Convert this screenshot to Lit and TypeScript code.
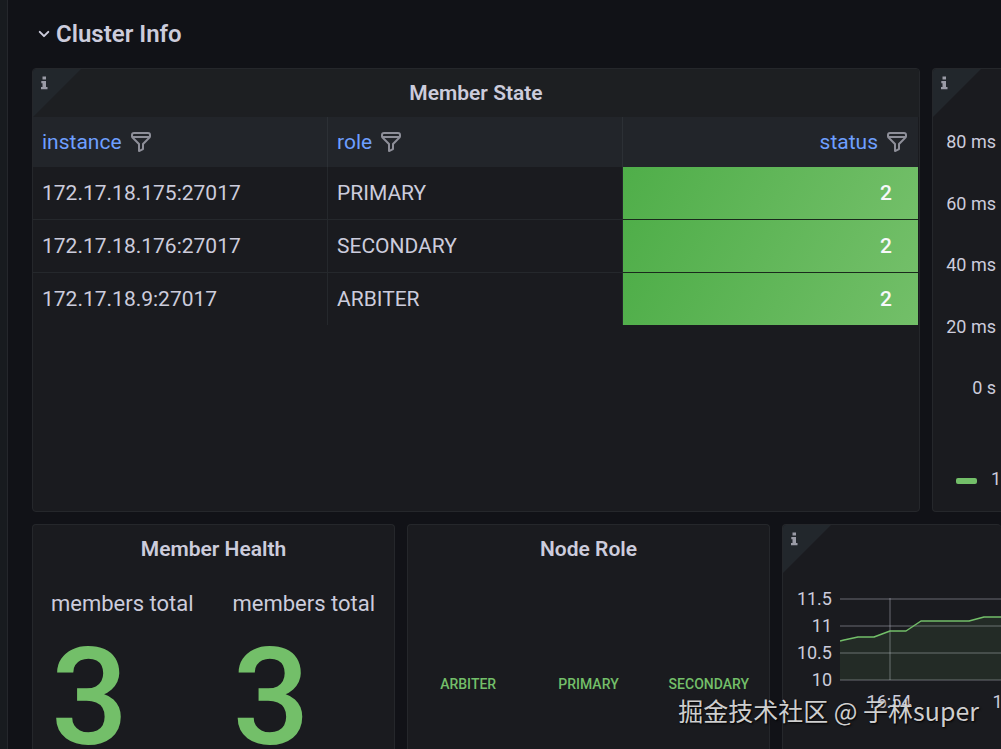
import { LitElement, html, css, svg } from "lit";
import { customElement } from "lit/decorators.js";

const filterIcon = html`<svg class="filter-icon" viewBox="0 0 24 24" aria-hidden="true"><path d="M19,2H5A3,3,0,0,0,2,5V6.17a3,3,0,0,0,.25,1.2l0,.06a2.81,2.81,0,0,0,.59.86L9,14.41V21a1,1,0,0,0,.47.85A1,1,0,0,0,10,22a1,1,0,0,0,.45-.11l4-2A1,1,0,0,0,15,19V14.41l6.12-6.12a2.81,2.81,0,0,0,.59-.86l0-.06A3,3,0,0,0,22,6.17V5A3,3,0,0,0,19,2ZM13.29,13.29A1,1,0,0,0,13,14v4.38l-2,1V14a1,1,0,0,0-.29-.71L5.41,8H18.59ZM20,6H4V5A1,1,0,0,1,5,4H19a1,1,0,0,1,1,1Z"/></svg>`;

const infoCorner = html`<button class="corner" aria-label="Panel description">
  <svg viewBox="0 0 48 48" aria-hidden="true">
    <path class="corner-fill" d="M0 0H48L0 48Z"/>
    <path class="corner-glyph" d="M9.5 7.5H13V10.5H9.5ZM8.3 12H13V18H14.5V20.2H8V18H9.5V14.2H8.3Z"/>
  </svg>
</button>`;

@customElement("app-root")
export class AppRoot extends LitElement {
  private members = [
    { instance: "172.17.18.175:27017", role: "PRIMARY", status: 2 },
    { instance: "172.17.18.176:27017", role: "SECONDARY", status: 2 },
    { instance: "172.17.18.9:27017", role: "ARBITER", status: 2 },
  ];
  private lagTicks = ["80 ms", "60 ms", "40 ms", "20 ms", "0 s"];
  private totals = [3, 3];
  private roles = ["ARBITER", "PRIMARY", "SECONDARY"];
  private chartTicks = ["11.5", "11", "10.5", "10"];

  static styles = css`
    :host {
      display: flex;
      height: 100vh;
      overflow: hidden;
      background: #111217;
      color: #ccccdc;
      font-family: Roboto, "Noto Sans CJK SC", sans-serif;
      font-size: 21px;
      line-height: 32px;
    }
    * { box-sizing: border-box; }
    button {
      border: 0;
      padding: 0;
      margin: 0;
      background: none;
      color: inherit;
      font: inherit;
      cursor: pointer;
    }
    .rail {
      flex: 0 0 8px;
      background: #181b1f;
      border-right: 1px solid #25272c;
    }
    .main {
      flex: 1;
      min-width: 0;
      display: flex;
      flex-direction: column;
      padding-left: 24px;
    }
    .row-title {
      margin: 0;
      font-size: 24px;
      font-weight: 600;
      line-height: 36px;
      padding: 16px 0;
    }
    .row-toggle { display: flex; align-items: center; }
    .chevron { width: 24px; height: 24px; fill: #ccccdc; }
    .row { display: grid; gap: 12px; }
    .row-top {
      grid-template-columns: minmax(0, 1fr) 69px;
      flex: 0 0 444px;
      margin-bottom: 12px;
    }
    .row-bottom {
      grid-template-columns: 121fr 121fr 73fr;
      flex: 1;
      min-height: 0;
    }
    .panel {
      position: relative;
      display: flex;
      flex-direction: column;
      min-width: 0;
      background: #1a1b1f;
      border: 1px solid #25272b;
      border-radius: 4px;
      overflow: hidden;
    }
    .panel-open { border-right: 0; border-radius: 4px 0 0 4px; }
    .row-bottom .panel { border-bottom: 0; border-radius: 4px 4px 0 0; }
    .panel-title {
      margin: 0;
      font-size: 21px;
      font-weight: 600;
      line-height: 48px;
      text-align: center;
    }
    .panel-title-active { background: #1d1f22; }
    .corner { position: absolute; left: 0; top: 0; width: 48px; height: 48px; }
    .corner svg { display: block; width: 48px; height: 48px; }
    .corner-fill { fill: #22272c; }
    .corner-glyph { fill: #9a9ba6; }

    .table-wrap { padding-right: 1px; }
    table { width: 100%; border-collapse: separate; border-spacing: 0; table-layout: fixed; }
    th {
      height: 50px;
      padding: 0 9px;
      background: #22252a;
      border-right: 1px solid #2c3035;
      font-weight: 400;
      text-align: left;
    }
    th:last-child { border-right: 0; text-align: right; }
    .head { display: flex; align-items: center; gap: 7px; }
    th:last-child .head { justify-content: flex-end; }
    .sort { color: #6e9fff; }
    .filter { display: flex; }
    .filter-icon { width: 24px; height: 24px; fill: #8e8f99; }
    td {
      height: 53px;
      padding: 0 9px;
      border-right: 1px solid #25282c;
      border-bottom: 1px solid #25282c;
    }
    tbody tr:last-child td { height: 52px; border-bottom: 0; }
    td.status {
      border-right: 0;
      border-bottom-color: #1a2a1c;
      padding-right: 26px;
      background: linear-gradient(120deg, #4fae49, #73bf69);
      color: #f7f8fa;
      font-weight: 500;
      text-align: right;
    }

    .lag-axis {
      display: flex;
      flex-direction: column;
      justify-content: space-between;
      height: 270px;
      margin-top: 61px;
      padding-right: 5px;
      font-size: 18px;
      line-height: 24px;
      text-align: right;
      white-space: nowrap;
    }
    .legend {
      display: flex;
      align-items: center;
      gap: 14px;
      margin-top: 67px;
      padding-left: 23px;
      font-size: 18px;
      line-height: 24px;
    }
    .swatch { flex: 0 0 21px; height: 6px; margin-top: 4px; border-radius: 2px; background: #73bf69; }

    .totals { display: grid; grid-template-columns: 1fr 1fr; gap: 20px; padding: 15px 0 0 18px; }
    .total-label { font-size: 22px; white-space: nowrap; }
    .total-value { color: #73bf69; font-size: 136px; font-weight: 500; line-height: 156px; }

    .roles {
      display: grid;
      grid-template-columns: 1fr 1fr 1fr;
      padding-top: 99px;
      color: #73bf69;
      font-size: 14px;
      font-weight: 500;
      line-height: 24px;
      text-align: center;
    }

    .chart { display: flex; gap: 8px; margin-top: 12px; font-size: 18px; line-height: 27px; }
    .chart-axis { flex: 0 0 49px; text-align: right; }
    .chart-plot { flex: 1; min-width: 0; height: 136px; margin-top: 13px; }
    .grid-line { stroke: #ccccdc; stroke-opacity: 0.22; stroke-width: 2; }
    .area { fill: #73bf69; fill-opacity: 0.1; }
    .series { fill: none; stroke: #73bf69; stroke-width: 1.5; stroke-linejoin: round; }
    .time { fill: #ccccdc; font-size: 18px; text-anchor: middle; }

    .watermark {
      position: absolute;
      right: 22px;
      bottom: 20px;
      font-family: "Noto Sans CJK SC", sans-serif;
      font-size: 25px;
      line-height: 38px;
      color: rgba(235, 235, 235, 0.88);
      text-shadow: 1px 1px 2px #000;
      white-space: nowrap;
      pointer-events: none;
    }
  `;

  private column(name: string) {
    return html`<th scope="col"><span class="head">
      <button class="sort">${name}</button>
      <button class="filter" aria-label="Filter ${name}">${filterIcon}</button>
    </span></th>`;
  }

  render() {
    return html`
      <aside class="rail"></aside>
      <main class="main">
        <h1 class="row-title"><button class="row-toggle" aria-expanded="true">
          <svg class="chevron" viewBox="0 0 24 24" aria-hidden="true"><path d="M17,9.17a1,1,0,0,0-1.41,0L12,12.71,8.46,9.17a1,1,0,0,0-1.41,0,1,1,0,0,0,0,1.42l4.24,4.24a1,1,0,0,0,1.42,0L17,10.59A1,1,0,0,0,17,9.17Z"/></svg>
          Cluster Info</button></h1>
        <div class="row row-top">
          <section class="panel">
            <h2 class="panel-title panel-title-active">Member State</h2>
            ${infoCorner}
            <div class="table-wrap">
              <table>
                <thead><tr>${["instance", "role", "status"].map((c) => this.column(c))}</tr></thead>
                <tbody>
                  ${this.members.map((m) => html`<tr>
                    <td>${m.instance}</td><td>${m.role}</td><td class="status">${m.status}</td>
                  </tr>`)}
                </tbody>
              </table>
            </div>
          </section>
          <section class="panel panel-open">
            ${infoCorner}
            <div class="lag-axis">${this.lagTicks.map((t) => html`<span>${t}</span>`)}</div>
            <div class="legend"><span class="swatch"></span><span>1</span></div>
          </section>
        </div>
        <div class="row row-bottom">
          <section class="panel">
            <h2 class="panel-title">Member Health</h2>
            <div class="totals">
              ${this.totals.map((n) => html`<div>
                <div class="total-label">members total</div>
                <div class="total-value">${n}</div>
              </div>`)}
            </div>
          </section>
          <section class="panel">
            <h2 class="panel-title">Node Role</h2>
            <div class="roles">${this.roles.map((r) => html`<span>${r}</span>`)}</div>
          </section>
          <section class="panel panel-open">
            ${infoCorner}
            <h2 class="panel-title">&nbsp;</h2>
            <div class="chart">
              <div class="chart-axis">${this.chartTicks.map((t) => html`<div>${t}</div>`)}</div>
              <svg class="chart-plot" role="img" aria-label="Time series">
                ${[1, 28, 55, 82].map((y) => svg`<line class="grid-line" x1="0" x2="100%" y1=${y} y2=${y}></line>`)}
                <line class="grid-line" x1="50" x2="50" y1="0" y2="82"></line>
                <path class="area" d="M0 43L4 42L18 39H34L50 33H66L81 23H129L144 19H240V82H0Z"/>
                <path class="series" d="M0 43L4 42L18 39H34L50 33H66L81 23H129L144 19H240"/>
                <text class="time" x="49" y="110">16:54</text>
                <text class="time" x="175" y="110">16:56</text>
              </svg>
            </div>
          </section>
        </div>
      </main>
      <div class="watermark">掘金技术社区 @ 子林super</div>
    `;
  }
}
